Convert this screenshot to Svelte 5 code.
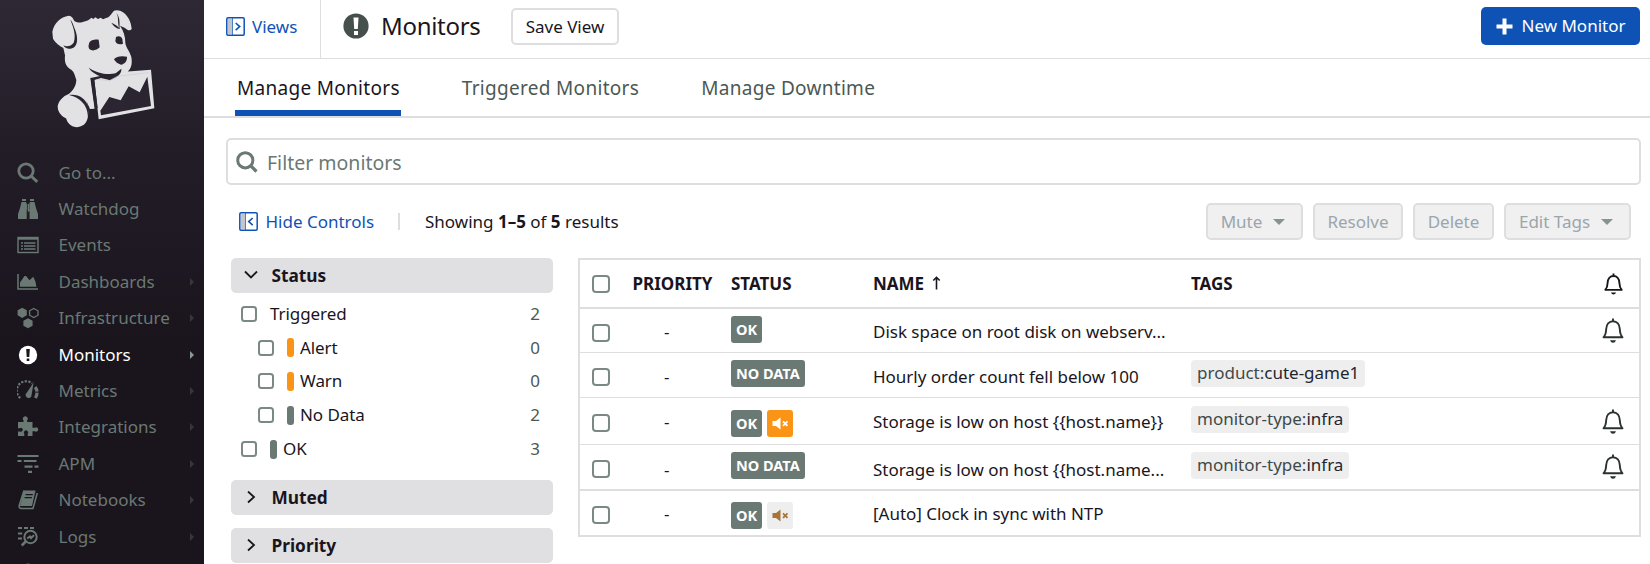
<script>
  const nav = [
    { icon: 'search', label: 'Go to...', arrow: false },
    { icon: 'binoculars', label: 'Watchdog', arrow: false },
    { icon: 'events', label: 'Events', arrow: false },
    { icon: 'chart', label: 'Dashboards', arrow: true },
    { icon: 'hexes', label: 'Infrastructure', arrow: true },
    { icon: 'alert', label: 'Monitors', arrow: true, active: true },
    { icon: 'gauge', label: 'Metrics', arrow: true },
    { icon: 'puzzle', label: 'Integrations', arrow: true },
    { icon: 'apm', label: 'APM', arrow: true },
    { icon: 'book', label: 'Notebooks', arrow: true },
    { icon: 'logs', label: 'Logs', arrow: true },
    { icon: 'dome', label: '', arrow: false }
  ];

  const statuses = [
    { label: 'Triggered', count: 2 },
    { label: 'Alert', count: 0, color: '#f99417', nested: true },
    { label: 'Warn', count: 0, color: '#f99417', nested: true },
    { label: 'No Data', count: 2, color: '#6a7974', nested: true },
    { label: 'OK', count: 3, color: '#6a7974' }
  ];

  // Row height, then the top offset of each cell inside its row.
  const rows = [
    { h: 44, box: 15, text: 11, badge: 7, tagTop: 7, bell: 9, status: 'OK', name: 'Disk space on root disk on webserv...', notify: true },
    { h: 45, box: 15, text: 12, badge: 7, tagTop: 7, bell: 9, status: 'NO DATA', name: 'Hourly order count fell below 100', tag: ['product:', 'cute-game1'] },
    { h: 47, box: 16, text: 12, badge: 12, tagTop: 8, bell: 11, status: 'OK', mute: 'on', name: 'Storage is low on host {{host.name}}', tag: ['monitor-type:', 'infra'], notify: true },
    { h: 46, box: 15, text: 13, badge: 7, tagTop: 7, bell: 9, status: 'NO DATA', name: 'Storage is low on host {{host.name...', tag: ['monitor-type:', 'infra'], notify: true, heavy: true },
    { h: 44, box: 15, text: 11, badge: 11, tagTop: 7, bell: 9, status: 'OK', mute: 'off', name: '[Auto] Clock in sync with NTP' }
  ];
</script>

{#snippet navIcon(name)}
  <svg class="nav-icon" width="22" height="22" viewBox="0 0 22 22" fill="none" stroke="currentColor">
    {#if name === 'search'}
      <circle cx="9" cy="9" r="7.200" stroke-width="2.800" />
      <path d="M14 14l6.300 5.800" stroke-width="3" />
    {:else if name === 'binoculars'}
      <path fill="currentColor" stroke="none" d="M5 1h4v2H5zM13 1h4v2h-4zM4.500 4H9l.8 2v15H1v-5l2-6zM17.500 4H13l-.8 2v6h-1.600v2h1.600v7H21v-5l-2-6zM9.500 6h3v6h-3z" />
      <path d="M10.400 4v17M12.100 13v8" stroke="#241f29" stroke-width=".8" />
    {:else if name === 'events'}
      <rect x="1" y="3.500" width="20" height="15" stroke-width="1.400" />
      <path d="M1 4.500h20" stroke-width="2.400" />
      <path d="M4 9h2M7 9h11.500M4 12h2M7 12h11.500M4 15h2M7 15h11.500" stroke-width="1.400" />
    {:else if name === 'chart'}
      <path d="M1 3v15h20" stroke-width="1.500" />
      <path fill="currentColor" stroke="none" d="M3 15.800v-4.300L7.500 5h1.600l3.400 4.200 3.800-3.500 2.200 5 .9 5.100z" />
    {:else if name === 'hexes'}
      <path fill="currentColor" stroke="none" d="M5.200.8l4.600 2.500v5l-4.600 2.600L.6 8.300v-5zM11 11.200l4.600 2.600v4.900L11 21.300l-4.600-2.600v-4.900z" />
      <path d="M16.800 1.500L21 3.800v4.400l-4.200 2.300-4.200-2.300V3.800z" stroke-width="1.300" />
    {:else if name === 'alert'}
      <circle cx="11" cy="11" r="9.200" fill="currentColor" stroke="none" />
      <path d="M9.200 5h3.600l-.5 8H9.700zM9.700 14.500h2.600v2.600H9.700z" fill="#1a151d" stroke="none" />
    {:else if name === 'gauge'}
      <path d="M3.300 18A9.300 9.300 0 0 1 15 3.300" stroke-width="2.200" stroke-dasharray="2.200 1.400" />
      <path d="M18.200 7q3.600 5 .2 11" stroke-width="3.200" stroke-dasharray="5 1 9" />
      <path fill="currentColor" stroke="none" d="M16.600 2.500l-2 12.300a3 3 0 1 1-4.700-2.200z" />
    {:else if name === 'puzzle'}
      <path fill="currentColor" stroke="none" d="M1 6h5.500V4.300a2.400 2.400 0 1 1 3.600 0V6h5.400v5.800h2.300a2.100 2.100 0 1 1 0 3.400h-2.300V20h-4.800v-2.200a2.100 2.100 0 1 0-3.400 0V20H1v-4.600h1.800a1.900 1.900 0 1 0 0-3.200H1z" />
    {:else if name === 'apm'}
      <path d="M.5 3h21" stroke-width="2" />
      <path d="M.5 8h4M6.800 8h12.700M7.500 13.600h8M17.500 13.600h4M11 18.900h4" stroke-width="2.200" />
    {:else if name === 'book'}
      <path fill="currentColor" stroke="none" d="M7 1.500h11.500L15 17H3z" />
      <path d="M7 1.500L2.200 16.500q-.4 3 2.200 3H16L20.300 4" stroke-width="1.500" />
      <path d="M8.500 5.600h7.300M7.600 8.600h7.300" stroke="#1a151d" stroke-width="1.300" />
    {:else if name === 'logs'}
      <path d="M1 2h4M7 2h4M13 2h4M1 7.500h5M1 12.500h4" stroke-width="2" stroke-dasharray="4 .8" />
      <circle cx="13.500" cy="11" r="6.200" stroke-width="2" />
      <path d="M8.800 15.300L4.800 19.500" stroke-width="2.600" />
      <path d="M10.200 12.500l2.800-2 1 1.600 3-3" stroke-width="2" />
    {:else}
      <path d="M5 4q6-5 12 0z" fill="currentColor" stroke="none" />
    {/if}
  </svg>
{/snippet}

{#snippet panelIcon(direction)}
  <svg class="panel-icon" width="19" height="19" viewBox="0 0 19 19" fill="none" stroke="#0f52b5">
    <path d="M2 2h4.500v15H2z" fill="#c3c7cb" stroke="none" />
    <rect x=".8" y=".8" width="17.400" height="17.400" rx="1.200" stroke-width="1.500" />
    <path d="M6.500 1v17" stroke-width=".7" />
    <path d={direction === 'right' ? 'M9.700 6l4 3.600-4 3.600' : 'M13.700 6l-4 3.600 4 3.600'} stroke-width="1.600" />
  </svg>
{/snippet}

{#snippet bell(w, h)}
  <svg width={w} height={h} viewBox="0 0 22 25" fill="none" stroke="currentColor">
    <path d="M11 .4v2.600M1.500 19.300c2.400-2.600 2.600-5 2.700-8.300C4.400 6.500 7 3.200 11 3.200s6.600 3.300 6.800 7.800c.1 3.300.3 5.700 2.700 8.300z" stroke-width={w < 22 ? 2.200 : 1.900} stroke-linejoin="round" />
    <path d="M8 22.200h6q-.8 2.500-3 2.500t-3-2.500z" fill="currentColor" stroke="none" />
  </svg>
{/snippet}

<div class="app">
  <aside>
    <svg class="logo" width="107" height="122" viewBox="150 25 321 366">
      <g fill="#e2e2e5">
        <path d="M157 96C162 70 182 52 206 48C216 49 219 56 223 64C232 69 240 70 248 67C259 64 268 61 274 54L280 58L286 53L294 58L302 54L309 59L318 55C328 54 333 43 342 33C352 29 364 33 373 41C386 52 394 70 395 88C391 94 384 93 375 85L360 78C371 94 376 110 376 130C378 144 390 157 394 172C397 190 395 207 382 216L363 217L453 210L463 326L296 359L283 239L271 235L284 327L270 328L256 297C265 315 266 336 263 356C258 374 246 382 229 383C211 380 203 371 198 356C185 350 173 338 173 320C176 303 189 290 206 283C219 273 228 260 229 241C224 225 221 213 210 208C197 199 193 187 195 167L190 145C178 139 165 128 159 117Z" />
      </g>
      <g fill="#2a2530">
        <path d="M211 60C220 82 229 107 221 129C213 140 200 142 190 137C196 149 213 151 224 141C236 129 232 103 222 82C219 72 216 64 211 60Z" />
        <path d="M349 40C357 52 352 65 357 84C348 75 340 72 334 69C346 87 356 87 359 88C358 76 362 54 349 40Z" />
        <path d="M267 132C270 121 284 119 296 120L299 143C290 153 275 155 268 148C265 143 265 137 267 132Z" />
        <path d="M348 112C355 108 365 109 367 119L369 132C358 137 348 132 346 124Z" />
        <path d="M342 179C348 169 367 168 381 171C382 184 374 193 363 195C354 193 346 187 342 179Z" />
        <path d="M266 204C285 218 320 228 347 221L364 207C365 218 359 224 350 232L331 242L303 235L283 241L272 235L300 229C285 224 272 214 266 204Z" />
        <path d="M272 234L282 237L293 324L285 329Z" />
        <path d="M303 347L301 333L328 292L362 302L386 260L419 278L442 231L453 319Z" />
        <path d="M207 286C235 282 257 296 266 323L262 364C269 327 249 296 207 286Z" />
      </g>
      <path d="M290 239L328 243L352 230L445 219" fill="none" stroke="#c9ced2" stroke-width="2" />
    </svg>
    <nav>
      {#each nav as item}
        <a class:active={item.active}>
          {@render navIcon(item.icon)}
          <span>{item.label}</span>
          {#if item.arrow}<i class="arrow"></i>{/if}
        </a>
      {/each}
    </nav>
  </aside>

  <main>
    <header>
      <div class="views">{@render panelIcon('right')}<span>Views</span></div>
      <div class="title">
        <svg width="26" height="26" viewBox="0 0 26 26">
          <circle cx="13" cy="13" r="12.600" fill="#45504c" />
          <path d="M10.500 4.500h5l-.7 11.500h-3.600zM11 18h4v4h-4z" fill="#fff" />
        </svg>
        <h1>Monitors</h1>
      </div>
      <button class="save">Save View</button>
      <button class="new">
        <svg width="17" height="17" viewBox="0 0 17 17"><path d="M8.500.5v16M.5 8.500h16" stroke="#fff" stroke-width="4" /></svg>
        <span>New Monitor</span>
      </button>
    </header>

    <div class="tabs">
      <a class="tab current">Manage Monitors</a>
      <a class="tab">Triggered Monitors</a>
      <a class="tab">Manage Downtime</a>
    </div>

    <div class="search">
      <svg width="22" height="22" viewBox="0 0 22 22" fill="none" stroke="#6a7974">
        <circle cx="9.300" cy="9.300" r="7.600" stroke-width="3" />
        <path d="M14.500 14.500l6 6" stroke-width="3.200" />
      </svg>
      <span>Filter monitors</span>
    </div>

    <div class="controls">
      <div class="hide">{@render panelIcon('left')}<span>Hide Controls</span></div>
      <i class="sep"></i>
      <p>Showing <b>1–5</b> of <b>5</b> results</p>
      <div class="actions">
        <button class="mute">Mute <i class="caret"></i></button>
        <button class="resolve">Resolve</button>
        <button class="delete">Delete</button>
        <button class="edit">Edit Tags <i class="caret"></i></button>
      </div>
    </div>

    <div class="body">
      <div class="facets">
        <div class="facet-head">
          <svg width="14" height="14" viewBox="0 0 14 14" fill="none" stroke="#1a151d" stroke-width="1.800"><path d="M1 2.500l6 6 6-6" /></svg>
          <span>Status</span>
        </div>
        <div class="facet-list">
          {#each statuses as s}
            <div class="facet-row" class:nested={s.nested} class:barred={s.color}>
              <i class="box"></i>
              {#if s.color}<i class="bar" style:background={s.color}></i>{/if}
              <span>{s.label}</span>
              <em>{s.count}</em>
            </div>
          {/each}
        </div>
        {#each ['Muted', 'Priority'] as label}
          <div class="facet-head closed">
            <svg width="14" height="14" viewBox="0 0 14 14" fill="none" stroke="#1a151d" stroke-width="1.800"><path d="M4 .5l6 5.500-6 5.500" /></svg>
            <span>{label}</span>
          </div>
        {/each}
      </div>

      <div class="table">
        <div class="row head">
          <i class="box"></i>
          <span class="c-priority">PRIORITY</span>
          <span class="c-status">STATUS</span>
          <span class="c-name">NAME <svg width="9" height="15" viewBox="0 0 9 15" fill="none" stroke="#1a151d" stroke-width="1.600"><path d="M4.500 13.500V1.500M1.300 4.500l3.200-3.200 3.200 3.200" /></svg></span>
          <span class="c-tags">TAGS</span>
          <span class="c-bell">{@render bell(19, 22)}</span>
        </div>
        {#each rows as r}
          <div class="row" class:heavy={r.heavy} style:height="{r.h}px">
            <i class="box" style:margin-top="{r.box}px"></i>
            <span class="dash" style:margin-top="{r.text}px">-</span>
            <span class="badges" style:margin-top="{r.badge}px">
              <b class="badge">{r.status}</b>
              {#if r.mute}
                <b class="speaker {r.mute}">
                  <svg width="17" height="13" viewBox="0 0 17 13" fill="currentColor">
                    <path d="M.5 4h3.500L8.500.5v12L4 9H.5z" />
                    <path d="M11 4.300l4.500 4.500M15.500 4.300L11 8.800" stroke="currentColor" stroke-width="1.800" />
                  </svg>
                </b>
              {/if}
            </span>
            <span class="name" style:margin-top="{r.text}px">{r.name}</span>
            <span class="tags">
              {#if r.tag}<span class="tag" style:margin-top="{r.tagTop}px">{r.tag[0]}<b>{r.tag[1]}</b></span>{/if}
            </span>
            <span class="c-bell" style:margin-top="{r.bell}px">{#if r.notify}{@render bell(22, 25)}{/if}</span>
          </div>
        {/each}
      </div>
    </div>
  </main>
</div>

<style>
  :global(body) { background: #fff; overflow: hidden; }
  .app {
    display: flex;
    width: 1650px;
    height: 564px;
    overflow: hidden;
    font-family: "Noto Sans", sans-serif;
    font-size: 17px;
    line-height: 24px;
    color: #1a151d;
  }
  .app * { box-sizing: border-box; }
  svg { display: block; flex: none; }
  i, em { font-style: normal; }
  button { font: inherit; color: inherit; padding: 0; display: flex; align-items: center; justify-content: center; }

  aside {
    width: 204px;
    height: 564px;
    flex: none;
    background: linear-gradient(#2d2833 0, #2a2530 50px, #211c26 160px, #1a151d 340px);
    overflow: hidden;
  }
  .logo { margin: 8px 0 0 50px; }
  nav { padding-top: 24.500px; color: #6a7974; }
  nav a { display: flex; align-items: center; height: 36.400px; padding-left: 16.500px; font-size: 17px; }
  nav a span { margin-left: 20px; flex: 1; white-space: nowrap; }
  nav a.active { color: #fff; }
  .arrow { margin-right: 10px; border-left: 4px solid #39343e; border-top: 4px solid transparent; border-bottom: 4px solid transparent; }
  .active .arrow { border-left-color: #8b9894; }

  main { flex: 1; min-width: 0; }
  header { display: flex; height: 59px; border-bottom: 1px solid #dedee0; }
  .views { display: flex; align-items: center; width: 117px; height: 58px; padding: 0 0 5px 22px; border-right: 1px solid #dedee0; color: #0f52b5; }
  .views span { margin-left: 7px; }
  .title { display: flex; align-items: center; height: 52px; width: 190px; padding-left: 22px; }
  h1 { margin: 0 0 0 12px; font-size: 24px; letter-spacing: -.3px; font-weight: 400; line-height: 34px; }
  .save { width: 108px; height: 37px; margin-top: 8px; background: #fff; border: 2px solid #dedee0; border-radius: 5px; }
  .new { width: 159px; height: 38px; margin: 7px 10px 0 auto; background: #0f52b5; border: 0; border-radius: 5px; color: #fff; gap: 9px; }

  .tabs { display: flex; height: 59px; border-bottom: 2px solid #dedee0; padding-left: 31px; gap: 59px; font-size: 19px; letter-spacing: .3px; }
  .tab { height: 57px; line-height: 59px; color: #4c5854; padding: 0 1px 0 2px; }
  .current { color: #1a151d; border-bottom: 6px solid #0f52b5; }

  .search { display: flex; align-items: center; height: 47px; margin: 20px 9px 0 22px; padding-left: 8px; border: 2px solid #dedee0; border-radius: 5px; color: #6a7974; font-size: 19.500px; }
  .search span { margin: 2px 0 0 9px; }

  .controls { display: flex; align-items: center; height: 37px; margin: 18px 19px 0 35px; }
  .hide { display: flex; align-items: center; color: #0f52b5; width: 159px; }
  .hide span { margin-left: 7.500px; }
  .sep { width: 2px; height: 17px; background: #dedee0; margin-right: 25px; }
  p { margin: 0; }
  .actions { display: flex; gap: 10px; margin-left: auto; }
  .actions button { height: 37px; background: #f0f0f1; border: 2px solid #dedee0; border-radius: 5px; color: #9ba5ab; }
  .caret { margin: 0 1px 0 11px; border-top: 6px solid #87938f; border-left: 6px solid transparent; border-right: 6px solid transparent; }
  .actions .mute { width: 97px; padding-right: 2px; }
  .resolve { width: 90px; }
  .delete { width: 81px; }
  .actions .edit { width: 127px; padding-right: 2px; }

  .body { display: flex; padding: 18px 9px 0 27px; }
  .facets { width: 322px; flex: none; margin-right: 25px; }
  .facet-head { display: flex; align-items: center; height: 35px; padding-left: 12.500px; border-radius: 5px; background: #e0e0e3; font-weight: 700; font-size: 17.300px; }
  .facet-head span { margin-left: 14px; }
  .closed { margin-bottom: 13px; }
  .facet-list { padding: 4px 14px 14px 10px; height: 187px; }
  .facet-row { display: flex; align-items: center; height: 33.800px; }
  .facet-row span { margin-left: 13px; letter-spacing: -.08px; }
  .facet-row em { margin-left: auto; margin-right: -1px; color: #4c5854; }
  .nested { padding-left: 17px; }
  .facet-row.barred span { margin-left: 6px; }
  .box { width: 16px; height: 16px; flex: none; border: 2px solid #7b8985; border-radius: 3.500px; background: #fff; }
  .bar { width: 7px; height: 19px; border-radius: 3px; margin-left: 13px; }

  .table { flex: 1; border: 2px solid #dedee0; height: 279px; }
  .row { display: grid; grid-template-columns: 41px 98px 142px 318px 1fr 52px; align-items: start; padding-left: 12px; border-bottom: 1px solid #dedee0; }
  .row.heavy { border-bottom-width: 2px; }
  .row:last-child { border-bottom: 0; }
  .row .box { width: 18px; height: 18px; border-radius: 4px; }
  .head { height: 49px; align-items: center; border-bottom-width: 2px; font-weight: 700; }
  .head .c-priority { margin-left: -.5px; }
  .head svg { display: inline-block; vertical-align: -1px; margin-left: 3px; }
  .c-bell { display: flex; justify-content: center; color: #2a3230; }
  .head .c-bell { color: #1a151d; }
  .head .c-bell :global(svg) { margin: 0; }
  .dash { padding-left: 31px; }
  .name { white-space: nowrap; letter-spacing: -.02px; }
  .badges { display: flex; gap: 5px; }
  .badge { height: 27px; padding: 0 5px; border-radius: 3px; background: #6a7974; color: #fff; font-size: 14.500px; line-height: 27px; }
  .speaker { width: 26px; height: 27px; border-radius: 3px; display: flex; align-items: center; justify-content: center; }
  .speaker.on { background: #f99417; color: #fff; }
  .speaker.off { background: #eeeeef; color: #a8743a; }
  .tags { display: flex; }
  .tag { height: 27px; line-height: 26px; padding: 0 6px; border-radius: 4px; background: #eeeeef; color: #3f4a48; white-space: nowrap; }
  .tag b { font-weight: 400; color: #1f2630; }
</style>
